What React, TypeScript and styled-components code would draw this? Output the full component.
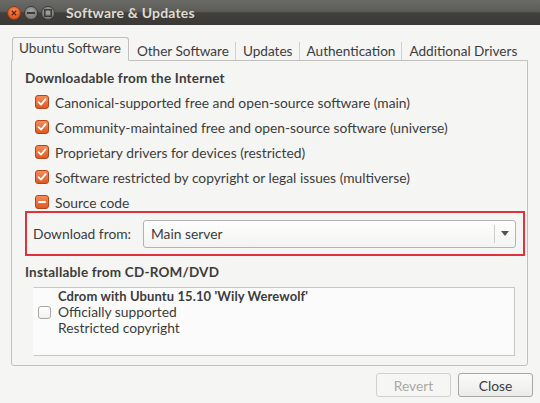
import React from 'react';
import styled, { createGlobalStyle } from 'styled-components';

const GlobalStyle = createGlobalStyle`
	html, body {
		margin: 0;
		padding: 0;
		background: #f5f5f4;
	}
	body {
		font-family: Lato, 'Liberation Sans', sans-serif;
	}
`;

type TBox = 'checked' | 'mixed' | 'empty';

const sources = [
	'Canonical-supported free and open-source software (main)',
	'Community-maintained free and open-source software (universe)',
	'Proprietary drivers for devices (restricted)',
	'Software restricted by copyright or legal issues (multiverse)',
];

const tabs = ['Other Software', 'Updates', 'Authentication', 'Additional Drivers'];

const CheckBox = ({ state }: { state: TBox }) => (
	<Box $state={state}>
		{state === 'checked' && (
			<svg width='10' height='10' viewBox='0 0 10 10'>
				<path d='M1.5 5.2 L4 7.6 L8.6 2.2' fill='none' stroke='#fff' strokeWidth='1.8' strokeLinecap='round' strokeLinejoin='round' />
			</svg>
		)}
		{state === 'mixed' && <MixedBar />}
	</Box>
);

const App = () => {
	return (
		<>
			<GlobalStyle />
			<Window>
				<TitleBar>
					<WinButtons>
						<WinButton $close>
							<svg width='6' height='6' viewBox='0 0 6 6'>
								<path d='M0.8 0.8 L5.2 5.2 M5.2 0.8 L0.8 5.2' stroke='#5a2410' strokeWidth='1.3' />
							</svg>
						</WinButton>
						<WinButton>
							<svg width='8' height='2' viewBox='0 0 8 2'>
								<rect x='0' y='0' width='8' height='2' fill='#3a3a38' />
							</svg>
						</WinButton>
						<WinButton>
							<svg width='8' height='8' viewBox='0 0 8 8'>
								<rect x='0.75' y='0.75' width='6.5' height='6.5' fill='none' stroke='#3a3a38' strokeWidth='1.5' />
							</svg>
						</WinButton>
					</WinButtons>
					<Title>Software &amp; Updates</Title>
				</TitleBar>

				<Content>
					<TabRow>
						<ActiveTab>Ubuntu Software</ActiveTab>
						{tabs.map((t, i) => (
							<Tab key={t} $sep={i > 0}>
								{t}
							</Tab>
						))}
						<TabFill />
					</TabRow>

					<Page>
						<SectionTitle>Downloadable from the Internet</SectionTitle>
						<Options>
							{sources.map(s => (
								<Option key={s}>
									<CheckBox state='checked' />
									{s}
								</Option>
							))}
							<Option>
								<CheckBox state='mixed' />
								Source code
							</Option>
						</Options>

						<Highlight>
							<FieldLabel>Download from:</FieldLabel>
							<Combo>
								<ComboText>Main server</ComboText>
								<ComboArrow>
									<svg width='8' height='5' viewBox='0 0 8 5'>
										<path d='M0 0 L8 0 L4 5 Z' fill='#555' />
									</svg>
								</ComboArrow>
							</Combo>
						</Highlight>

						<SectionTitle $top={7}>Installable from CD-ROM/DVD</SectionTitle>
						<ListBox>
							<ListRow>
								<CheckBox state='empty' />
								<ListText>
									<strong>Cdrom with Ubuntu 15.10 'Wily Werewolf'</strong>
									<span>Officially supported</span>
									<span>Restricted copyright</span>
								</ListText>
							</ListRow>
						</ListBox>
					</Page>

					<Actions>
						<Button disabled>Revert</Button>
						<Button>Close</Button>
					</Actions>
				</Content>
			</Window>
		</>
	);
};

const Window = styled.div`
	width: 540px;
	height: 403px;
	display: flex;
	flex-direction: column;
	background: #f5f5f4;
	color: #3c3c3c;
	font-size: 13.8px;
	overflow: hidden;
`;

const TitleBar = styled.div`
	height: 25px;
	flex: none;
	display: flex;
	align-items: center;
	padding-left: 7px;
	background: linear-gradient(#6a6a67 0%, #5c5c59 45%, #41403d 52%, #3a3936 100%);
`;

const WinButtons = styled.div`
	display: flex;
	gap: 3px;
	align-items: center;
`;

const WinButton = styled.div<{ $close?: boolean }>`
	width: 14px;
	height: 14px;
	box-sizing: border-box;
	border-radius: 50%;
	display: flex;
	align-items: center;
	justify-content: center;
	border: 1px solid ${p => (p.$close ? '#8e3a16' : '#3b3b39')};
	background: ${p =>
		p.$close
			? 'radial-gradient(circle at 50% 35%, #f98d5c, #e2581f 70%)'
			: 'radial-gradient(circle at 50% 35%, #a4a4a0, #7d7d79 70%)'};
`;

const Title = styled.div`
	margin-left: 11px;
	font-weight: 700;
	font-size: 14px;
	color: #dfdbd2;
	letter-spacing: 0.2px;
`;

const Content = styled.div`
	flex: 1;
	display: flex;
	flex-direction: column;
	padding: 11px 12px 0 11px;
`;

const TabRow = styled.div`
	height: 24px;
	display: flex;
	align-items: flex-end;
	position: relative;
	z-index: 1;
	font-size: 13.6px;
	white-space: nowrap;
`;

const ActiveTab = styled.div`
	flex: none;
	height: 24px;
	box-sizing: border-box;
	margin-left: 1px;
	padding: 0 7px 2px 6px;
	display: flex;
	align-items: center;
	border: 1px solid #c2c0bc;
	border-bottom: 1px solid #f5f5f4;
	border-radius: 3px 3px 0 0;
	background: #f5f5f4;
	margin-bottom: -1px;
`;

const Tab = styled.div<{ $sep: boolean }>`
	flex: none;
	height: 17px;
	padding: 0 6px 1px 7px;
	display: flex;
	align-items: center;
	border-left: 1px solid ${p => (p.$sep ? '#d3d1ce' : 'transparent')};
`;

const TabFill = styled.div`
	flex: 1;
`;

const Page = styled.div`
	height: 306px;
	box-sizing: border-box;
	border: 1px solid #c2c0bc;
	border-radius: 0 0 3px 3px;
	padding: 8px 2px 0 13px;
	display: flex;
	flex-direction: column;
`;

const SectionTitle = styled.div<{ $top?: number }>`
	margin-top: ${p => p.$top ?? 0}px;
	font-weight: 700;
	font-size: 13.5px;
	letter-spacing: 0.2px;
	height: 18px;
	line-height: 18px;
`;

const Options = styled.div`
	display: flex;
	flex-direction: column;
	gap: 7px;
	margin-top: 6px;
	padding-left: 10px;
`;

const Option = styled.div`
	height: 18px;
	display: flex;
	align-items: center;
	gap: 6px;
	white-space: nowrap;
`;

const Box = styled.div<{ $state: TBox }>`
	flex: none;
	box-sizing: border-box;
	display: flex;
	align-items: center;
	justify-content: center;
	width: ${p => (p.$state === 'empty' ? 13 : 14)}px;
	height: ${p => (p.$state === 'empty' ? 13 : 14)}px;
	border-radius: 3px;
	border: 1px solid ${p => (p.$state === 'empty' ? '#a8a6a2' : '#b0461a')};
	background: ${p =>
		p.$state === 'empty' ? 'linear-gradient(#ffffff, #f1f1f0)' : 'linear-gradient(#f48c5a, #de5a22)'};
`;

const MixedBar = styled.div`
	width: 8px;
	height: 2px;
	border-radius: 1px;
	background: #fff;
`;

const Highlight = styled.div`
	height: 45px;
	box-sizing: border-box;
	border: 2px solid #e0323a;
	display: flex;
	align-items: center;
	padding: 0 7px 0 6px;
`;

const FieldLabel = styled.div`
	width: 110px;
	flex: none;
`;

const Combo = styled.div`
	flex: 1;
	height: 28px;
	box-sizing: border-box;
	border: 1px solid #b5b3af;
	border-radius: 3px;
	background: linear-gradient(#fefefe, #f3f3f2);
	display: flex;
	align-items: center;
`;

const ComboText = styled.div`
	flex: 1;
	padding-left: 7px;
`;

const ComboArrow = styled.div`
	width: 20px;
	height: 18px;
	border-left: 1px solid #d0cecb;
	display: flex;
	align-items: center;
	justify-content: center;
`;

const ListBox = styled.div`
	margin: 6px 10px 0 8px;
	height: 69px;
	box-sizing: border-box;
	border: 1px solid #c9c7c3;
	border-left-color: transparent;
	background: #fbfbfb;
`;

const ListRow = styled.div`
	display: flex;
	align-items: center;
	gap: 7px;
	padding-left: 4px;
`;

const ListText = styled.div`
	display: flex;
	flex-direction: column;
	line-height: 16px;

	strong {
		font-weight: 700;
		font-size: 13px;
		letter-spacing: 0.1px;
	}
`;

const Actions = styled.div`
	display: flex;
	justify-content: flex-end;
	gap: 7px;
	margin-top: 7px;
	margin-right: -5px;
`;

const Button = styled.button`
	width: 75px;
	height: 24px;
	border-radius: 3px;
	font-family: inherit;
	font-size: 13.8px;
	color: #3c3c3c;
	border: 1px solid #a9a7a3;
	background: linear-gradient(#fbfbfb, #ebebea);

	&:disabled {
		color: #a9a9a7;
		border-color: #d2d0cd;
		background: #f6f6f5;
	}
`;

export default App;
